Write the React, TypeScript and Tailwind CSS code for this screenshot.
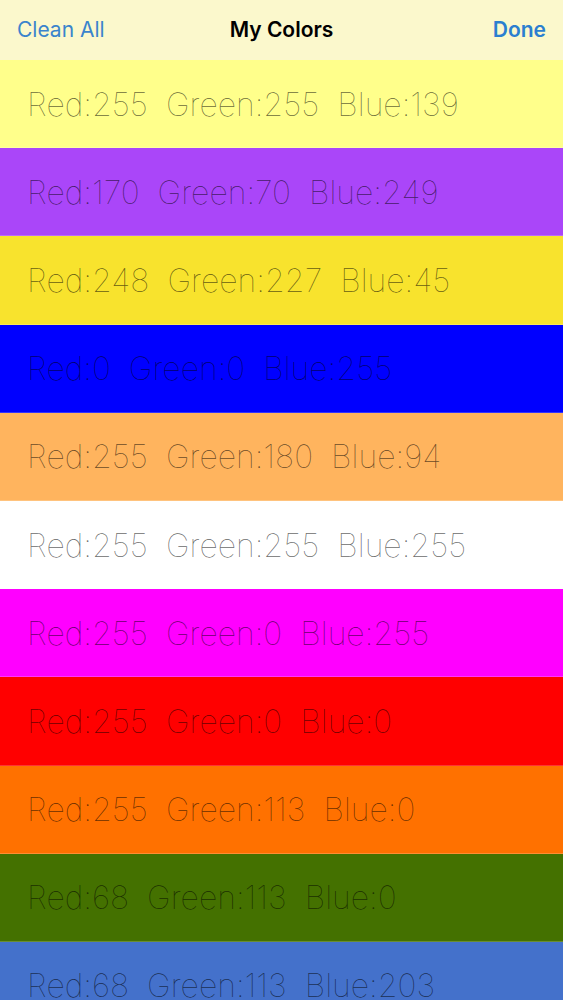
import React from 'react';

const colors: [number, number, number][] = [
  [255, 255, 139],
  [170, 70, 249],
  [248, 227, 45],
  [0, 0, 255],
  [255, 180, 94],
  [255, 255, 255],
  [255, 0, 255],
  [255, 0, 0],
  [255, 113, 0],
  [68, 113, 0],
  [68, 113, 203],
];

const App: React.FC = () => {
  return (
    <div className="w-[563px] h-[1000px] overflow-hidden bg-white font-['Inter','Liberation_Sans',sans-serif]">
      <div className="h-[60px] bg-[#fbf8cc] grid grid-cols-[1fr_auto_1fr] items-center px-[17px] text-[21px]">
        <span className="text-[#3a84cc] justify-self-start">Clean All</span>
        <span className="font-semibold text-black">My Colors</span>
        <span className="font-semibold text-[#2b7fd0] justify-self-end">Done</span>
      </div>
      {colors.map(([r, g, b], idx) => (
        <div
          key={idx}
          className="h-[88.2px] flex items-center pl-[27px] border-b border-white/20"
          style={{ backgroundColor: `rgb(${r}, ${g}, ${b})` }}
        >
          <span className="whitespace-pre text-[32px] font-thin text-black/60 pt-[2px]">
            {`Red:${r}  Green:${g}  Blue:${b}`}
          </span>
        </div>
      ))}
    </div>
  );
};

export default App;
